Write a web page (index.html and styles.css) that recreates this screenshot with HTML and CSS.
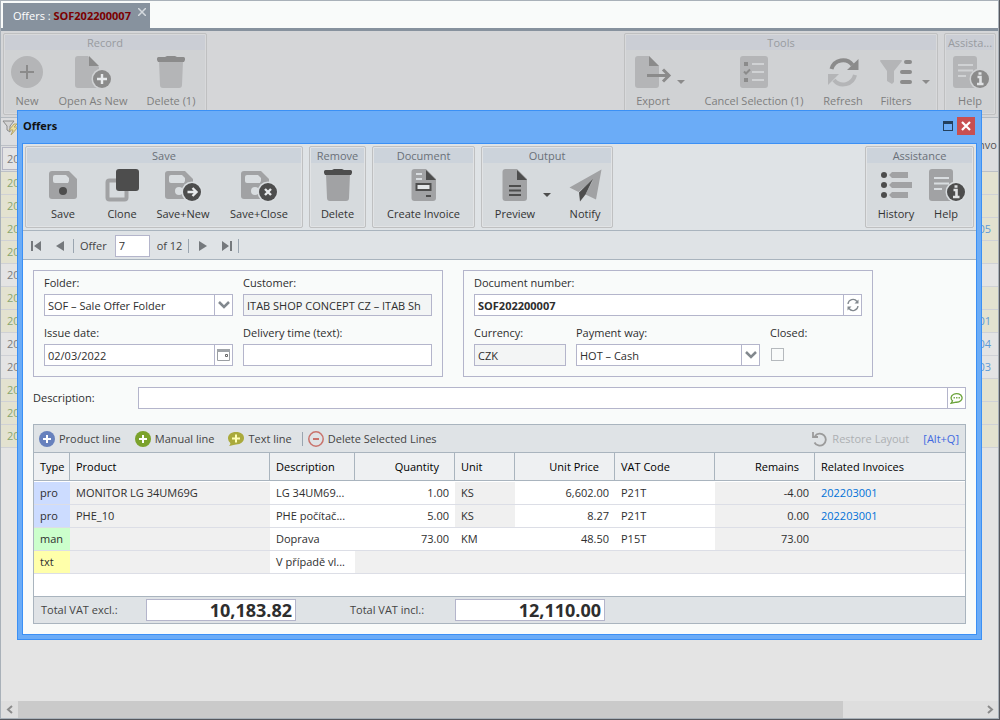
FILE: index.html
```html
<!DOCTYPE html>
<html lang="en">
<head>
<meta charset="utf-8">
<title>Offers</title>
<link rel="stylesheet" href="styles.css">
</head>
<body>
<svg class="defs" aria-hidden="true">
  <symbol id="i-save" viewBox="0 0 40 36"><path class="l" d="M9 4h17l8 8v17a3 3 0 0 1-3 3H9a3 3 0 0 1-3-3V7a3 3 0 0 1 3-3z"/><path class="b" d="M12 8h11l3 3v3l-1 2H12a2 2 0 0 1-2-2v-4a2 2 0 0 1 2-2z"/><circle class="d" cx="20" cy="24" r="4"/></symbol>
  <symbol id="i-disk" viewBox="0 0 40 36"><path class="l" d="M5 4h17l8 8v17a3 3 0 0 1-3 3H5a3 3 0 0 1-3-3V7a3 3 0 0 1 3-3z"/><path class="b" d="M8 8h11l3 3v3l-1 2H8a2 2 0 0 1-2-2v-4a2 2 0 0 1 2-2z"/><circle class="b" cx="16" cy="24" r="4"/><circle class="b" cx="29" cy="25" r="10.5"/><circle class="d" cx="29" cy="25" r="9"/></symbol>
  <symbol id="i-savenew" viewBox="0 0 40 36"><use href="#i-disk" width="40" height="36"/><path class="wl" d="M24.5 25h9M29.5 21l4 4-4 4"/></symbol>
  <symbol id="i-saveclose" viewBox="0 0 40 36"><use href="#i-disk" width="40" height="36"/><path class="wl" d="M26 22l6 6M32 22l-6 6"/></symbol>
  <symbol id="i-clone" viewBox="0 0 40 36"><rect class="ll" x="5.500" y="13.500" width="19" height="19" rx="2"/><rect class="d" x="14" y="2" width="23" height="22" rx="3"/></symbol>
  <symbol id="i-trash" viewBox="0 0 40 36"><path class="l" d="M8 7h24l-1 24a3 3 0 0 1-3 3H12a3 3 0 0 1-3-3z"/><path class="d" d="M6 4.500A1.500 1.500 0 0 1 7.500 3H14l2-1h8l2 1h6.500A1.500 1.500 0 0 1 34 4.500V6l-1 2H7L6 6z"/></symbol>
  <symbol id="i-doc" viewBox="0 0 40 36"><path class="l" d="M10.500 2H22l10 10v19a3 3 0 0 1-3 3H10.500a3 3 0 0 1-3-3V5a3 3 0 0 1 3-3z"/><path class="d" d="M22 3l10 10H22z"/></symbol>
  <symbol id="i-invoice" viewBox="0 0 40 36"><use href="#i-doc" width="40" height="36"/><path class="bl" d="M12 7h6M12 12h6"/><rect x="12.500" y="17" width="14" height="6" class="box"/><path class="dl" d="M22 29h5"/></symbol>
  <symbol id="i-preview" viewBox="0 0 40 36"><use href="#i-doc" width="40" height="36"/><path class="dl" d="M14 19h12M14 23.500h12M14 28h12"/></symbol>
  <symbol id="i-plane" viewBox="0 0 40 36"><path class="l" d="M36.500 2.500L4.500 20.500l9 4.500L28 13l-7.500 14.500L31 32.500z"/><path class="d" d="M28 12L14 25.500l1 9 5.500-7z"/></symbol>
  <symbol id="i-history" viewBox="0 0 40 36"><circle class="d" cx="8" cy="8" r="3"/><circle class="d" cx="8" cy="18" r="3"/><circle class="d" cx="8" cy="28" r="3"/><path class="l" d="M13 8l3-3h16v6H16zM13 18l3-3h20v6H16zM13 28l3-3h16v6H16z"/></symbol>
  <symbol id="i-help" viewBox="0 0 40 36"><rect class="l" x="3" y="2" width="24" height="32" rx="3"/><path class="bl" d="M8 11h15M8 16.500h15M8 22h8"/><circle class="b" cx="30" cy="25" r="10.500"/><circle class="d" cx="30" cy="25" r="9"/><path class="il" d="M27.500 23h3v7M27 30h6.500M28.500 19.500h3"/></symbol>
  <symbol id="i-new" viewBox="0 0 40 36"><circle class="l" cx="20" cy="18" r="16"/><path class="dl" d="M20 11v14M13 18h14"/></symbol>
  <symbol id="i-open" viewBox="0 0 40 36"><path class="l" d="M5 2h10l11 11v21H5a3 3 0 0 1-3-3V5a3 3 0 0 1 3-3z"/><path class="d" d="M16 2l10 10H16z"/><circle class="b" cx="29" cy="25" r="10.500"/><circle class="d" cx="29" cy="25" r="9"/><path class="wl" d="M29 20v10M24 25h10"/></symbol>
  <symbol id="i-export" viewBox="0 0 40 36"><path class="l" d="M5 2h11l10 10v19a3 3 0 0 1-3 3H5a3 3 0 0 1-3-3V5a3 3 0 0 1 3-3z"/><path class="d" d="M16 2l10 10H16z"/><path class="arrow" d="M14 21.500h22M30 15.500l6 6-6 6"/></symbol>
  <symbol id="i-cancel" viewBox="0 0 40 36"><rect class="l" x="6" y="2" width="28" height="32" rx="3"/><path class="d" d="M10 8h4v4h-4zM10 24h4v4h-4z"/><path class="dl" d="M10 17.500l2 2 4-4"/><path class="bl" d="M18 10h12M18 18h12M18 26h12"/></symbol>
  <symbol id="i-refresh" viewBox="0 0 40 36"><path class="dl big" d="M8.500 15A12 12 0 0 1 29.500 11"/><path class="d" d="M35.500 5v11H24z"/><path class="ll big" d="M32 21A12 12 0 0 1 11 26"/><path class="l" d="M5 31V20h11z"/></symbol>
  <symbol id="i-filter" viewBox="0 0 40 36"><path class="l" d="M4 7a1 1 0 0 1 1-1h20a1 1 0 0 1 1 1L18 17v11l-2 2-5-3V17z"/><path class="bars" d="M30 8h4M26 18h8M26 28h8"/></symbol>
  <symbol id="i-chev" viewBox="0 0 18 20"><path d="M4 7l5 5 5-5" fill="none" stroke="#82888e" stroke-width="2.500"/></symbol>
</svg>
<main class="app">
  <header class="tabs">
    <div class="tab"><span>Offers : <b>SOF202200007</b></span><button class="tab-x" aria-label="Close tab"><svg width="8" height="8" viewBox="0 0 8 8"><path d="M0 0l8 8M8 0L0 8" stroke="#d4d9de" stroke-width="1.500"/></svg></button></div>
  </header>
  <div class="ribbon muted">
    <section class="group"><h2>Record</h2><div class="btns">
      <button class="tool w44"><svg><use href="#i-new"/></svg>New</button>
      <button class="tool w88"><svg><use href="#i-open"/></svg>Open As New</button>
      <button class="tool w68"><svg><use href="#i-trash"/></svg>Delete (1)</button>
    </div></section>
    <section class="group right tools"><h2>Tools</h2><div class="btns">
      <button class="tool w44"><svg><use href="#i-export"/></svg>Export</button><button class="caret" aria-label="Export options"></button>
      <button class="tool w120"><svg><use href="#i-cancel"/></svg>Cancel Selection (1)</button>
      <button class="tool w58"><svg><use href="#i-refresh"/></svg>Refresh</button>
      <button class="tool w48"><svg><use href="#i-filter"/></svg>Filters</button><button class="caret" aria-label="Filter options"></button>
    </div></section>
    <section class="group narrow"><h2>Assista...</h2><div class="btns">
      <button class="tool w50"><svg><use href="#i-help"/></svg>Help</button>
    </div></section>
  </div>
  <table class="back">
    <thead>
      <tr class="head"><th><svg width="18" height="20" viewBox="0 0 18 20"><path d="M2 3h11L9 8v6l-3-2V8z" fill="#d4d4d4" stroke="#8a8a8a"/><path d="M13 6L8 12h4l-2 5 7-8h-4l3-3z" fill="#e9dda0" stroke="#b5a66c"/></svg></th><th rowspan="2">Invo</th></tr>
      <tr class="find"><th><input value="20" aria-label="Find"></th></tr>
    </thead>
    <tbody>
      <tr class="y"><td>20</td><td></td></tr>
      <tr class="y"><td>20</td><td></td></tr>
      <tr class="y"><td>20</td><td><a href="#">05</a></td></tr>
      <tr class="y"><td>20</td><td></td></tr>
      <tr><td>20</td><td></td></tr>
      <tr class="y"><td>20</td><td></td></tr>
      <tr class="y"><td>20</td><td><a href="#">01</a></td></tr>
      <tr><td>20</td><td><a href="#">04</a></td></tr>
      <tr><td>20</td><td><a href="#">03</a></td></tr>
      <tr class="y"><td>20</td><td></td></tr>
      <tr class="y"><td>20</td><td></td></tr>
      <tr class="y"><td>20</td><td></td></tr>
    </tbody>
  </table>
  <div class="scroll"><button aria-label="Scroll left"><svg width="8" height="9" viewBox="0 0 8 9"><path d="M6 1L2 4.500 6 8" fill="none" stroke="#8b8b8b" stroke-width="2"/></svg></button><div class="track"><div class="thumb"></div></div><button aria-label="Scroll right"><svg width="8" height="9" viewBox="0 0 8 9"><path d="M2 1l4 3.500L2 8" fill="none" stroke="#8b8b8b" stroke-width="2"/></svg></button></div>
</main>

<div class="dialog" role="dialog" aria-labelledby="dlg-title">
  <div class="title"><h1 id="dlg-title">Offers</h1>
    <button class="max" aria-label="Maximize"></button>
    <button class="close" aria-label="Close"><svg width="10" height="10" viewBox="0 0 10 10"><path d="M1 1l8 8M9 1L1 9" stroke="#fff" stroke-width="2.200"/></svg></button>
  </div>
  <div class="inner">
    <div class="ribbon">
      <section class="group save"><h2>Save</h2><div class="btns">
        <button class="tool w48"><svg><use href="#i-save"/></svg>Save</button>
        <button class="tool w48 gap"><svg><use href="#i-clone"/></svg>Clone</button>
        <button class="tool w74"><svg><use href="#i-savenew"/></svg>Save+New</button>
        <button class="tool w78"><svg><use href="#i-saveclose"/></svg>Save+Close</button>
      </div></section>
      <section class="group"><h2>Remove</h2><div class="btns">
        <button class="tool w53"><svg><use href="#i-trash"/></svg>Delete</button>
      </div></section>
      <section class="group"><h2>Document</h2><div class="btns">
        <button class="tool w99"><svg><use href="#i-invoice"/></svg>Create Invoice</button>
      </div></section>
      <section class="group output"><h2>Output</h2><div class="btns">
        <button class="tool w48"><svg><use href="#i-preview"/></svg>Preview</button><button class="caret" aria-label="Preview options"></button>
        <button class="tool w48"><svg><use href="#i-plane"/></svg>Notify</button>
      </div></section>
      <section class="group right assist"><h2>Assistance</h2><div class="btns">
        <button class="tool w50"><svg><use href="#i-history"/></svg>History</button>
        <button class="tool w50"><svg><use href="#i-help"/></svg>Help</button>
      </div></section>
    </div>
    <nav class="pager">
      <button aria-label="First"><svg width="10" height="10" viewBox="0 0 10 10"><path d="M0 0h2v10H0zM10 0v10L3 5z"/></svg></button>
      <button class="prev" aria-label="Previous"><svg width="8" height="10" viewBox="0 0 8 10"><path d="M8 0v10L0 5z"/></svg></button>
      <i></i><label for="page">Offer</label><input id="page" value="7"><span>of 12</span><i></i>
      <button class="next" aria-label="Next"><svg width="8" height="10" viewBox="0 0 8 10"><path d="M0 0v10l8-5z"/></svg></button>
      <button aria-label="Last"><svg width="10" height="10" viewBox="0 0 10 10"><path d="M8 0h2v10H8zM0 0v10l7-5z"/></svg></button><i></i>
    </nav>
    <form class="form" onsubmit="return false">
      <div class="panels">
        <div class="panel two">
          <div class="field"><label for="folder">Folder:</label><div class="combo"><select id="folder"><option>SOF – Sale Offer Folder</option></select><span class="drop"><svg width="18" height="20"><use href="#i-chev"/></svg></span></div></div>
          <div class="field"><label for="cust">Customer:</label><input id="cust" class="ro" readonly value="ITAB SHOP CONCEPT CZ – ITAB Sh"></div>
          <div class="field"><label for="date">Issue date:</label><div class="combo"><input id="date" value="02/03/2022"><button class="side" type="button" aria-label="Pick date"><svg width="13" height="12" viewBox="0 0 13 12"><path d="M.5.500h12v11H.5z" fill="#fff" stroke="#9a9ea2"/><path d="M0 0h13v3H0z" fill="#a0a4a8"/><path d="M8.500 5.500h2v2h-2z" fill="#fff" stroke="#666"/></svg></button></div></div>
          <div class="field"><label for="deliv">Delivery time (text):</label><input id="deliv"></div>
        </div>
        <div class="panel three">
          <div class="field wide"><label for="num">Document number:</label><div class="combo"><input id="num" class="strong" value="SOF202200007"><button class="side" type="button" aria-label="Renumber"><svg width="14" height="14" viewBox="0 0 14 14" fill="none" stroke="#82888e" stroke-width="1.300"><path d="M2 6a5 5 0 0 1 9-2.500M12 8a5 5 0 0 1-9 2.500"/><path d="M12.500 1.500v4h-4zM1.500 12.500v-4h4z" fill="#82888e" stroke="none"/></svg></button></div></div>
          <div class="field"><label for="cur">Currency:</label><input id="cur" class="ro" readonly value="CZK"></div>
          <div class="field"><label for="pay">Payment way:</label><div class="combo"><select id="pay"><option>HOT – Cash</option></select><span class="drop"><svg width="18" height="20"><use href="#i-chev"/></svg></span></div></div>
          <div class="field"><label for="closed">Closed:</label><input type="checkbox" id="closed"></div>
        </div>
      </div>
      <div class="desc"><label for="desc">Description:</label><div class="combo"><input id="desc"><button class="side" type="button" aria-label="Edit text"><svg width="13" height="12" viewBox="0 0 13 12"><path d="M3 9.200A5.500 4.300 0 1 1 6 10.200L1 11.300 2.500 9z" fill="#fff" stroke="#6ba33a" stroke-width="1.300"/><path d="M3.500 5h1.500v1.500H3.500zM6 5h1.500v1.500H6zM8.500 5H10v1.500H8.500z" fill="#7fae52"/></svg></button></div></div>
      <div class="lines">
        <div class="bar">
          <button><svg width="16" height="16" viewBox="0 0 16 16"><circle cx="8" cy="8" r="8" fill="#6781bd"/><path d="M8 4v8M4 8h8" stroke="#fff" stroke-width="2"/></svg>Product line</button>
          <button><svg width="16" height="16" viewBox="0 0 16 16"><circle cx="8" cy="8" r="8" fill="#7ba22c"/><path d="M8 4v8M4 8h8" stroke="#fff" stroke-width="2"/></svg>Manual line</button>
          <button><svg width="16" height="16" viewBox="0 0 16 16"><path d="M8 1c5 0 8 2.500 8 6s-3 6.500-8 6.500c-1.500 0-3 1-7 1.500 1-1 1.500-2 1.300-3A6 6 0 0 1 0 7.500C0 3.500 3 1 8 1z" fill="#aaaa3c"/><path d="M8 3.500v8M4 7.500h8" stroke="#ffffb8" stroke-width="2"/></svg>Text line</button>
          <i></i>
          <button><svg width="16" height="16" viewBox="0 0 16 16"><circle cx="8" cy="8" r="7.200" fill="none" stroke="#c9736c" stroke-width="1.500"/><path d="M5 8h6" stroke="#c9736c" stroke-width="2"/></svg>Delete Selected Lines</button>
          <button class="restore" disabled><svg width="16" height="16" viewBox="0 0 16 16"><path d="M3 5a6 6 0 1 1-.5 6.500M1 1v5h5" fill="none" stroke="#9b9b9b" stroke-width="1.800"/></svg>Restore Layout</button>
          <span class="key">[Alt+Q]</span>
        </div>
        <table class="grid">
          <colgroup><col class="c36"><col class="c200"><col class="c85"><col class="c100"><col class="c60"><col class="c100"><col class="c100"><col class="c100"><col></colgroup>
          <thead><tr><th>Type</th><th>Product</th><th>Description</th><th class="n">Quantity</th><th>Unit</th><th class="n">Unit Price</th><th>VAT Code</th><th class="n">Remains</th><th>Related Invoices</th></tr></thead>
          <tbody>
            <tr><td class="pro">pro</td><td>MONITOR LG 34UM69G</td><td class="w">LG 34UM69...</td><td class="w n">1.00</td><td>KS</td><td class="w n">6,602.00</td><td class="w">P21T</td><td class="n">-4.00</td><td><a href="#">202203001</a></td></tr>
            <tr><td class="pro">pro</td><td>PHE_10</td><td class="w">PHE počítač...</td><td class="w n">5.00</td><td>KS</td><td class="w n">8.27</td><td class="w">P21T</td><td class="n">0.00</td><td><a href="#">202203001</a></td></tr>
            <tr><td class="man">man</td><td></td><td class="w">Doprava</td><td class="w n">73.00</td><td class="w">KM</td><td class="w n">48.50</td><td class="w">P15T</td><td class="n">73.00</td><td></td></tr>
            <tr><td class="txt">txt</td><td></td><td class="w">V případě vl...</td><td></td><td></td><td></td><td></td><td></td><td></td></tr>
          </tbody>
        </table>
        <div class="totals"><label for="t1">Total VAT excl.:</label><input id="t1" readonly value="10,183.82"><label for="t2">Total VAT incl.:</label><input id="t2" readonly value="12,110.00"></div>
      </div>
    </form>
  </div>
</div>
</body>
</html>
```

FILE: styles.css
```css
* { box-sizing: border-box; }
body {
  margin: 0;
  min-height: 100vh;
  padding: 0 1px 1px 0;
  background: #55575d;
  font: 11px/16px "Open Sans", "Noto Sans", sans-serif;
  color: #2e2e2e;
  display: flex;
  overflow: hidden;
}
.defs { position: absolute; width: 0; height: 0; }
button, input, select { font: inherit; color: inherit; }
button { border: 0; background: none; padding: 0; }
h1, h2 { margin: 0; font-size: inherit; font-weight: 400; }
b { color: #7b0000; }
a { text-decoration: none; }

.app {
  flex: 1;
  display: flex;
  flex-direction: column;
  border: 1px solid #a9b1b9;
  background: #e4e4e4;
  min-width: 0;
}
.tabs {
  display: flex;
  height: 30px;
  padding: 2px 2px 0;
  background: #f9fbfa;
  border-bottom: 3px solid #87929e;
}
.tab {
  display: flex;
  width: 147px;
  padding: 5px 4px 0 10px;
  background: #87929e;
  color: #fff;
  justify-content: space-between;
  white-space: nowrap;
}
.tab-x { height: 8px; display: flex; }

/* ribbon */
.ribbon {
  --l: #a1a2a4; --d: #4d4d4d; --b: #d9dde0;
  display: flex;
  gap: 6px;
  height: 87px;
  padding: 2px;
  background: #dfe3e6;
  border-bottom: 1px solid #a9b4be;
  color: #333;
}
.ribbon.muted {
  --l: #b4b5b7; --d: #8b8b8b; --b: #d0d2d4;
  background: #d5d6d8;
  border-color: #b4bac0;
  color: #7e7e7e;
}
.group {
  border: 1px solid #bfc0c1;
  border-radius: 2px;
  box-shadow: inset 0 0 0 1px #e1e3e5;
  background: #d6dadd;
  padding: 1px;
}
.muted .group { background: #d0d2d4; box-shadow: inset 0 0 0 1px #d8d9db; }
.group h2 {
  height: 15px;
  line-height: 15px;
  background: #ccd3db;
  color: #6a7078;
  text-align: center;
}
.muted .group h2 { background: #cbced5; color: #989ba0; }
.right { margin-left: auto; }
.btns { display: flex; padding-top: 4px; }
.save .btns { padding-left: 12px; }
.output .btns { padding-left: 8px; }
.output { width: 132px; }
.assist { width: 109px; }
.assist .btns { padding-left: 4px; }
.tools .btns { padding-left: 5px; }
.tools { width: 314px; }
.narrow { width: 52px; overflow: hidden; }
.narrow h2 { white-space: nowrap; }
.save { width: 278px; }
.tool {
  display: flex;
  flex-direction: column;
  align-items: center;
  white-space: nowrap;
  gap: 3px;
}
.gap { margin-left: 11px; }
.tool svg { width: 40px; height: 36px; }
.w44 { width: 44px; } .w48 { width: 48px; } .w50 { width: 50px; } .w53 { width: 53px; }
.w58 { width: 58px; } .w68 { width: 68px; } .w74 { width: 74px; } .w78 { width: 78px; }
.w88 { width: 88px; } .w99 { width: 99px; } .w120 { width: 120px; }
.caret { width: 12px; margin-right: 7px; }
.output .caret { margin: 0 8px 0 2px; }
.tool + .caret:last-child { margin-right: 0; }
.caret::before {
  content: "";
  display: block;
  margin: 0 auto;
  width: 0;
  border: 4px solid transparent;
  border-top-color: var(--d);
  border-bottom: 0;
}
.l { fill: var(--l); } .d { fill: var(--d); } .b { fill: var(--b); }
.ll, .dl, .bl, .wl, .il, .arrow, .bars { fill: none; stroke-width: 2; }
.ll { stroke: var(--l); stroke-width: 4; }
.dl, .arrow, .bars { stroke: var(--d); }
.bl { stroke: var(--b); }
.wl { stroke: #e8eaec; stroke-width: 2.4; }
.il { stroke: #e0e2e4; stroke-width: 2.6; }
.arrow { stroke-width: 3; }
.bars { stroke-width: 4; stroke-linecap: round; }
.big { stroke-width: 4; }
.box { fill: #e3e6e8; stroke: var(--d); stroke-width: 2; }

/* list behind the dialog */
.back { width: 100%; border-collapse: separate; border-spacing: 0; table-layout: fixed; color: #7d7d7d; }
.back th, .back td { padding: 0; border-bottom: 1px solid #cfd1d6; overflow: hidden; }
.head { height: 28px; }
.back th { background: #dcdddf; text-align: left; font-weight: 400; vertical-align: top; border-color: #bcc0c6; }
.back th[rowspan] { vertical-align: middle; width: 23px; white-space: nowrap; color: #555; }
.find { height: 25px; }
.find input { width: 60px; height: 23px; margin: 1px; border: 1px solid #b4b5c3; background: #e4e4e4; padding: 0 4px; display: block; }
.back tbody tr { height: 23px; }
.back td { padding-left: 6px; line-height: 22px; }
.back td:last-child { text-align: right; padding: 0 7px 0 0; }
.back .y { background: #e3e2d0; color: #8aa76f; }
.back a { color: #5f9bd5; }

.scroll { display: flex; height: 17px; margin-top: auto; background: #dedede; }
.scroll button { width: 17px; display: flex; align-items: center; justify-content: center; }
.track { flex: 1; }
.thumb { width: 85.7%; height: 17px; background: #cacaca; }

/* dialog */
.dialog {
  position: absolute;
  left: 17px;
  right: 18px;
  top: 110px;
  padding: 0 4px 4px;
  border: 1px solid #3b90f5;
  background: #6bacf7;
}
.title { display: flex; height: 32px; align-items: center; padding: 0 2px 2px 1px; }
.title h1 { flex: 1; font-weight: 700; color: #111; }
.max { width: 10px; height: 10px; border: 1px solid #23405e; border-top-width: 3px; margin-right: 4px; }
.close { width: 18px; height: 18px; background: #c84f51; display: flex; align-items: center; justify-content: center; }
.inner { border: 1px solid #3b90f5; background: #f9fbfa; }

.pager { display: flex; align-items: center; height: 29px; padding: 1px 0 0 8px; background: #dfe3e6; border-bottom: 1px solid #a9b4be; color: #444; }
.pager button { display: flex; }
.pager svg { fill: #75797d; }
.pager i { width: 1px; height: 14px; background: #9aa5b0; margin: 0 6px; }
.prev { margin: 0 3px 0 15px; }
.next { margin: 0 15px 0 4px; }
.pager input { width: 35px; height: 22px; margin: 0 7px 0 8px; padding: 0 3px; border: 1px solid #b4b5cb; background: #fff; color: #333; }

.form { padding: 10px; }
.panels { display: flex; gap: 20px; }
.panel { width: 410px; height: 107px; padding: 4px 10px; border: 1px solid #b4b5cb; display: grid; gap: 9px 10px; align-content: start; }
.two { grid-template-columns: 1fr 1fr; }
.three { grid-template-columns: 92px 184px 1fr; }
.wide { grid-column: 1 / -1; }
.field { display: flex; flex-direction: column; min-width: 0; }
.field label { height: 19px; white-space: nowrap; }
.field input, .combo { height: 22px; border: 1px solid #b4b5cb; background: #fff; padding: 1px 3px 0; width: 100%; min-width: 0; }
.field input.ro { background: #f3f5f5; }
.combo { display: flex; padding: 0; position: relative; }
.combo input, .combo select { border: 0; flex: 1; height: 20px; min-width: 0; padding: 1px 3px 0; background: #fff; }
.combo select { appearance: none; }
.side { width: 18px; border-left: 1px solid #b4b5cb; display: flex; align-items: center; justify-content: center; }
.drop { position: absolute; right: 0; top: 0; width: 18px; overflow: hidden; border-left: 1px solid #b4b5cb; height: 20px; pointer-events: none; background: #fff; }
.combo .strong { font-weight: 700; }
.field input[type="checkbox"] { appearance: none; width: 13px; height: 13px; margin: 4px 0 0 1px; padding: 0; border-color: #b5b9bd; background: #f9fbfa; }

.desc { display: flex; align-items: center; margin-top: 10px; }
.desc label { width: 105px; flex: none; }

.lines { margin-top: 15px; border: 1px solid #a9b4be; background: #fff; }
.bar { display: flex; align-items: center; gap: 14px; height: 28px; padding: 1px 6px 0 5px; background: #dfe3e6; border-bottom: 1px solid #a9b4be; color: #444; }
.bar button { display: flex; align-items: center; gap: 4px; white-space: nowrap; }
.bar i { width: 1px; height: 14px; background: #9aa5b0; margin: 0 -9px 0 -4px; }
.bar .restore { margin-left: auto; color: #adb0b3; }
.key { color: #4169e1; }

.grid { width: 100%; table-layout: fixed; border-collapse: separate; border-spacing: 0; margin-bottom: 22px; }
.c36 { width: 36px; } .c200 { width: 200px; } .c85 { width: 85px; } .c100 { width: 100px; } .c60 { width: 60px; }
.grid th { height: 28px; padding: 0 6px; background: #eef0f2; border: 0 solid #a9b4be; border-width: 0 1px 1px 0; text-align: left; font-weight: 400; color: #000; white-space: nowrap; }
.grid th:last-child { border-right: 0; }
.grid td { height: 23px; padding: 0 6px; background: #f0f0f0; border-bottom: 1px solid #dcdee6; white-space: nowrap; overflow: hidden; }
.grid tbody::before { content: ""; display: block; height: 1px; }
.grid .n { text-align: right; }
.grid th.n { padding-right: 15px; }
.grid .w { background: #fff; }
.grid .pro { background: #ccdcff; } .grid .man { background: #ccffcc; } .grid .txt { background: #ffffaa; }
.grid a { color: #0071d8; }

.totals { display: flex; align-items: center; height: 27px; padding-left: 7px; background: #dfe3e6; border-top: 1px solid #a9b4be; color: #444; }
.totals label { width: 105px; }
.totals input { width: 150px; height: 22px; border: 1px solid #b4b5cb; background: #fff; text-align: right; font-weight: 700; font-size: 18px; line-height: 20px; padding: 0 3px; color: #2e2e2e; }
.totals input + label { margin-left: 54px; }
```
